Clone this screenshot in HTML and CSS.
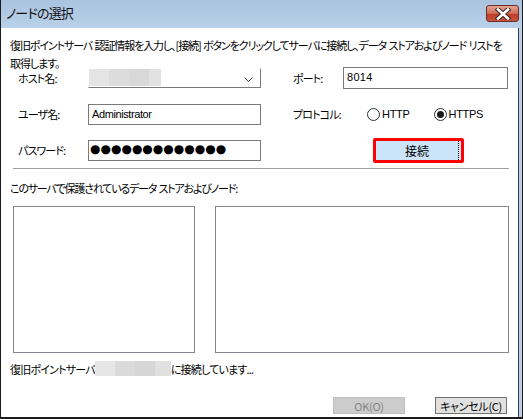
FILE: index.html
```html
<!DOCTYPE html>
<html lang="ja">
<head>
<meta charset="utf-8">
<link rel="stylesheet" href="styles.css">
</head>
<body>
<div class="window">
  <div class="titlebar">
    <span class="title">ノードの選択</span>
    <span class="close">
      <svg width="16" height="12" viewBox="0 0 16 12"><path d="M3 1.5 L13 10.5 M13 1.5 L3 10.5" stroke="#3a2a2a" stroke-width="4.6" stroke-linecap="square"/><path d="M3 1.5 L13 10.5 M13 1.5 L3 10.5" stroke="#ffffff" stroke-width="2.6" stroke-linecap="square"/></svg>
    </span>
  </div>
  <div class="client">
    <p class="intro">復旧ポイントサーバ 認証情報を入力し、[接続] ボタンをクリックしてサーバに接続し、データ ストアおよびノード リストを<br>取得します。</p>
    <div class="form">
      <span class="label">ホスト名:</span>
      <div class="combo"><span class="blur"></span><svg class="chev" width="9" height="5" viewBox="0 0 9 5"><path d="M0.5 0.5 L4.5 4.5 L8.5 0.5" fill="none" stroke="#404040" stroke-width="1"/></svg></div>
      <span class="spacer"></span>
      <span class="label">ポート:</span>
      <div class="field port">8014</div>

      <span class="label">ユーザ名:</span>
      <div class="field">Administrator</div>
      <span class="spacer"></span>
      <span class="label">プロトコル:</span>
      <div class="radios">
        <span class="radio"><span class="circle"></span>HTTP</span>
        <span class="radio"><span class="circle checked"></span>HTTPS</span>
      </div>

      <span class="label">パスワード:</span>
      <div class="field pw">●●●●●●●●●●●●●</div>
      <span class="spacer"></span>
      <span class="label"></span>
      <div class="btncell"><span class="focusring"><button class="connect">接続</button></span></div>
    </div>
    <div class="sep"></div>
    <p class="caption">このサーバで保護されているデータ ストアおよびノード:</p>
    <div class="lists">
      <div class="list list-left"></div>
      <div class="list list-right"></div>
    </div>
    <p class="status">復旧ポイントサーバ<span class="blur2"></span>に接続しています...</p>
    <div class="buttons">
      <button class="btn" disabled>OK(O)</button>
      <button class="btn">キャンセル(C)</button>
    </div>
  </div>
</div>
</body>
</html>
```

FILE: styles.css
```css
* { box-sizing: border-box; }
html, body { margin: 0; padding: 0; background: #ffffff; }
body {
  width: 523px;
  height: 419px;
  overflow: hidden;
  font-family: "Noto Sans CJK JP", "Liberation Sans", sans-serif;
  font-size: 11px;
  color: #000;
  font-feature-settings: "palt";
}
.window {
  width: 523px;
  height: 419px;
  display: flex;
  flex-direction: column;
  border-left: 1px solid #1b1b1b;
  border-right: 1px solid #1b1b1b;
  border-bottom: 2px solid #1b1b1b;
  background: #b9d1ea;
}
.titlebar {
  height: 28px;
  flex: none;
  display: flex;
  align-items: flex-start;
  justify-content: space-between;
  background: linear-gradient(#a9c2de, #b9d1ea);
  padding: 0 3px 0 5px;
}
.title {
  font-size: 13px;
  line-height: 26px;
  color: #111;
  letter-spacing: -0.8px;
}
.close {
  margin-top: 5px;
  width: 33px;
  height: 17px;
  border: 1px solid #6b2d24;
  border-radius: 3px;
  background: linear-gradient(#e3a394, #cf6a55 50%, #bb3a24 51%, #c8553f);
  display: flex;
  align-items: center;
  justify-content: center;
}
.client {
  flex: 1;
  min-width: 0;
  background: #ffffff;
  margin-right: 3px;
  border-right: 1px solid #3c3c3c;
  padding: 8px 0 0 9px;
  display: flex;
  flex-direction: column;
}
.intro {
  margin: 0;
  line-height: 18px;
  white-space: nowrap;
  letter-spacing: -1.1px;
  word-spacing: 1px;
}
.form {
  margin-top: -6px;
  margin-left: 8px;
  display: grid;
  grid-template-columns: 70px 173px 32px 50px 165px;
  grid-template-rows: 24px 24px 24px;
  row-gap: 12px;
  align-items: center;
}
.label { white-space: nowrap; letter-spacing: -0.9px; }
.combo {
  height: 20px;
  border: 1px solid #7a7a7a;
  border-top-color: #ffffff;
  border-left-color: #ffffff;
  display: flex;
  align-items: center;
  justify-content: space-between;
  padding-right: 7px;
}
.blur {
  width: 72px;
  height: 17px;
  margin-top: -2px;
  background: linear-gradient(90deg, #e4e4e4 0 20px, #dcdcdc 20px 40px, #d8d8d8 40px 60px, #e2e2e2 60px);
}
.chev { margin-top: 3px; }
.field {
  height: 21px;
  border: 1px solid #7a7a7a;
  font-family: "Liberation Sans", sans-serif;
  font-size: 11px;
  padding: 2px 3px;
  line-height: 14px;
  letter-spacing: -0.4px;
}
.port { height: 22px; letter-spacing: 0.3px; }
.pw {
  font-family: "DejaVu Sans", sans-serif;
  font-size: 12px;
  line-height: 15px;
  padding: 1px 1px;
  letter-spacing: 0;
}
.radios {
  display: flex;
  margin-left: 24px;
  gap: 24px;
}
.radio {
  display: flex;
  align-items: center;
  gap: 2px;
  font-family: "Liberation Sans", sans-serif;
  font-size: 11px;
  letter-spacing: -0.3px;
}
.circle {
  width: 13px;
  height: 13px;
  border: 1px solid #333;
  border-radius: 50%;
  background: #fff;
  display: flex;
  align-items: center;
  justify-content: center;
}
.circle.checked::after {
  content: "";
  width: 7px;
  height: 7px;
  border-radius: 50%;
  background: #1a1a1a;
}
.btncell { display: flex; margin-left: 30px; }
.focusring {
  border: 3px solid #ff0000;
  border-radius: 2px;
  display: flex;
  background: #cce4f7;
}
.connect {
  width: 83px;
  height: 19px;
  margin: 0 2px 0 0;
  border: none;
  border-right: 1px dotted #000;
  background: #cce4f7;
  font-family: "Noto Sans CJK JP", sans-serif;
  font-feature-settings: "palt";
  font-size: 12px;
  line-height: 15px;
  padding: 0;
  color: #000;
}
.sep {
  margin: 6px 0 0 3px;
  width: 496px;
  height: 1px;
  background: #a0a0a0;
  flex: none;
}
.caption {
  margin: 12px 0 0 0;
  line-height: 14px;
  letter-spacing: -1.2px;
  word-spacing: 1px;
}
.lists {
  margin: 11px 0 0 3px;
  display: flex;
  gap: 20px;
}
.list {
  height: 147px;
  border: 1px solid #828790;
}
.list-left { width: 182px; }
.list-right { width: 294px; }
.status {
  margin: 8px 0 0 0;
  line-height: 14px;
  display: flex;
  align-items: center;
  letter-spacing: -0.8px;
}
.blur2 {
  width: 76px;
  height: 15px;
  background: linear-gradient(90deg, #e6e6e6 0 20px, #dadada 20px 40px, #d6d6d6 40px 60px, #e0e0e0 60px);
}
.buttons {
  margin-top: 21px;
  display: grid;
  grid-template-columns: 72px 72px;
  justify-content: end;
  column-gap: 30px;
  padding-right: 11px;
}
.btn {
  width: 72px;
  height: 17px;
  margin: 0;
  padding: 0;
  border: 1px solid #707070;
  background: #e1e1e1;
  font-family: "Noto Sans CJK JP", sans-serif;
  font-feature-settings: "palt";
  font-size: 11px;
  line-height: 14px;
  color: #000;
  letter-spacing: -0.3px;
  white-space: nowrap;
}
.btn:disabled {
  border-color: #bfbfbf;
  background: #cccccc;
  color: #838383;
}
```
